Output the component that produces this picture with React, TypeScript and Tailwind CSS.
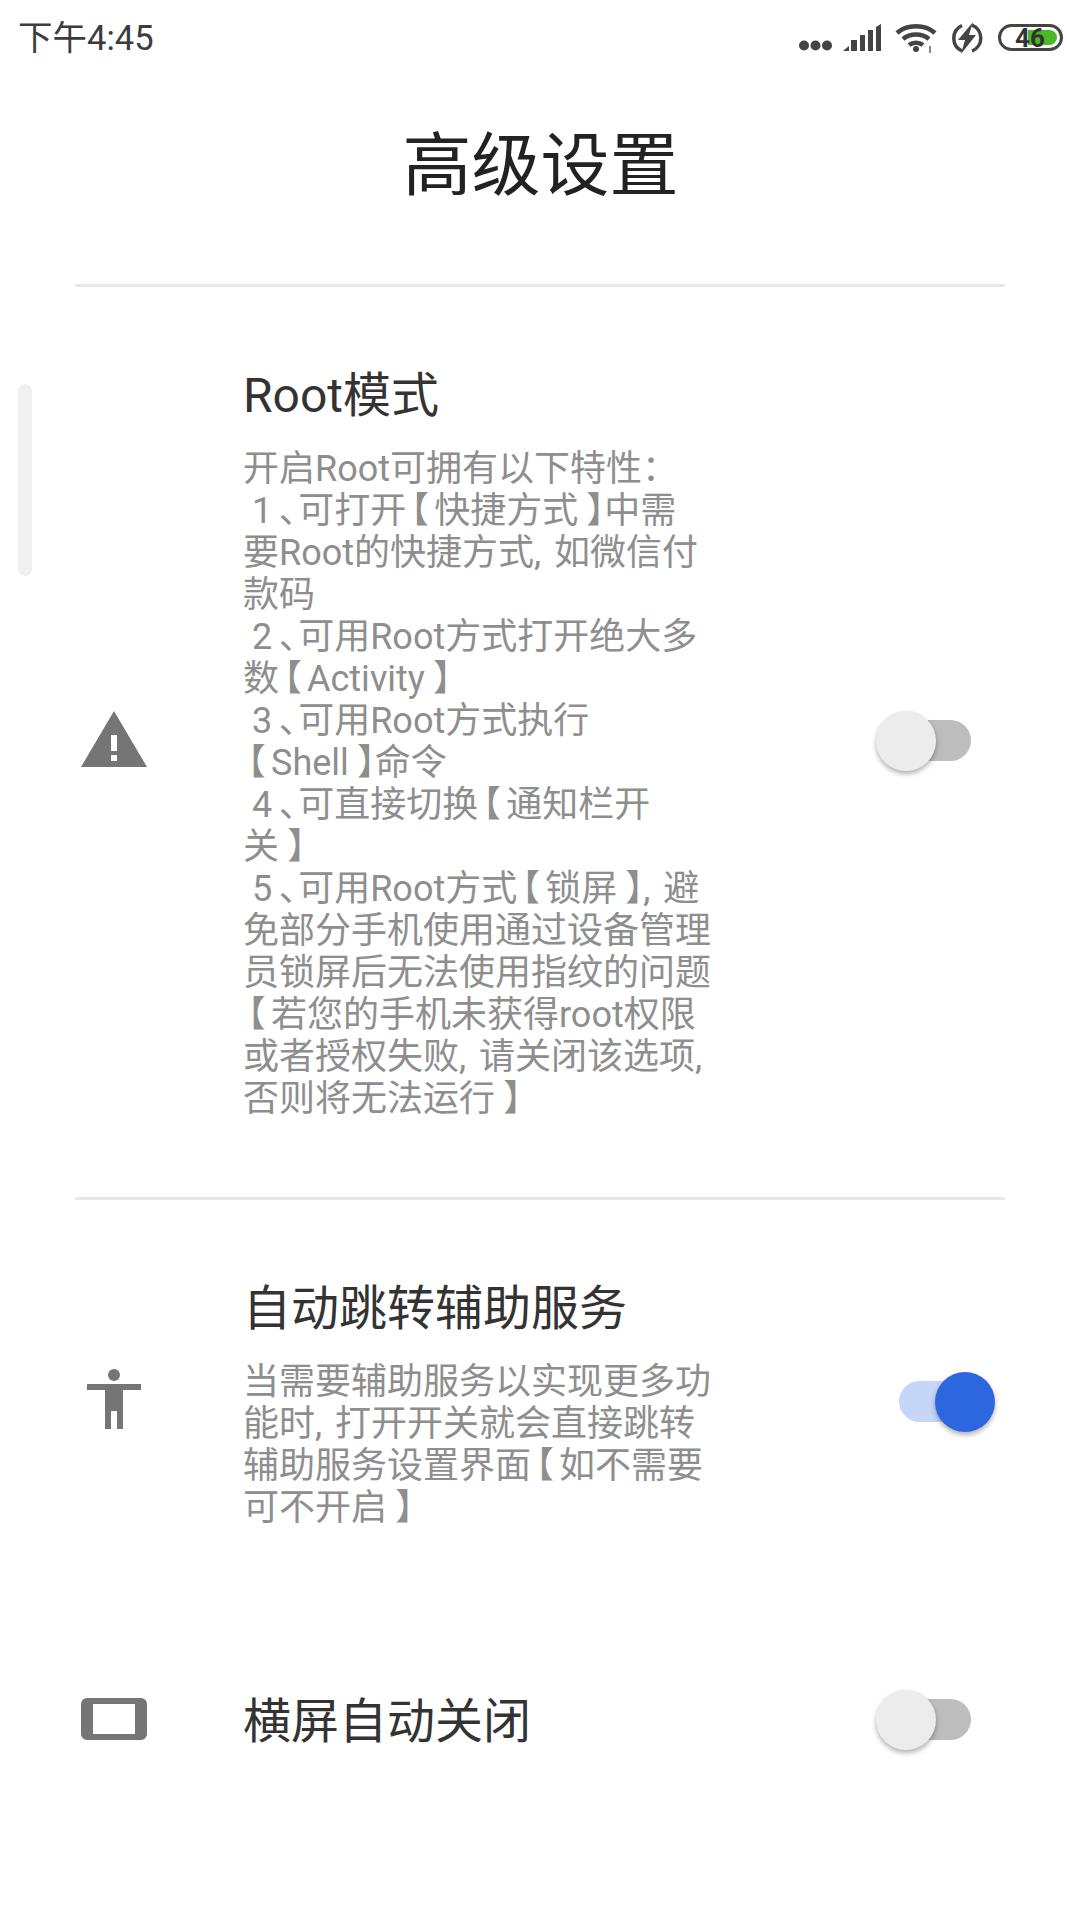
const rootLines = [
  '开启Root可拥有以下特性：',
  ' 1、可打开【快捷方式】中需',
  '要Root的快捷方式, 如微信付',
  '款码',
  ' 2、可用Root方式打开绝大多',
  '数【Activity】',
  ' 3、可用Root方式执行',
  '【Shell】命令',
  ' 4、可直接切换【通知栏开',
  '关】',
  ' 5、可用Root方式【锁屏】, 避',
  '免部分手机使用通过设备管理',
  '员锁屏后无法使用指纹的问题',
  '【若您的手机未获得root权限',
  '或者授权失败, 请关闭该选项,',
  '否则将无法运行】',
]

const autoLines = [
  '当需要辅助服务以实现更多功',
  '能时, 打开开关就会直接跳转',
  '辅助服务设置界面【如不需要',
  '可不开启】',
]

// the phone's font sets these punctuation marks tighter than Noto does
function Line({ text }: { text: string }) {
  const parts = text.split(/(【|】|、|, )/)
  return (
    <div className="whitespace-pre">
      {parts.map((p, i) => {
        if (p === '【') return <span key={i} className="inline-block w-[28px] pl-[4px] [font-feature-settings:'palt']">{p}</span>
        if (p === '】') return <span key={i} className="inline-block w-[26px] pl-[9px] [font-feature-settings:'palt']">{p}</span>
        if (p === '、') return <span key={i} className="inline-block w-[26px] pl-[7px] [font-feature-settings:'palt']">{p}</span>
        if (p === ', ') return <span key={i} className="mr-[4px]">{p}</span>
        return <span key={i}>{p}</span>
      })}
    </div>
  )
}

function Toggle({ on }: { on?: boolean }) {
  return (
    <div className={on ? 'relative h-[41px] w-[71px] rounded-full bg-[#c6d6f8]' : 'relative ml-[1px] h-[41px] w-[71px] rounded-full bg-[#bdbdbd]'}>
      <div
        className={
          on
            ? 'absolute -top-[9px] -right-[25px] h-[60px] w-[60px] rounded-full bg-[#2c67e0] shadow-[0_3px_5px_rgba(0,0,0,0.3)]'
            : 'absolute -top-[9px] -left-[24px] h-[60px] w-[60px] rounded-full bg-[#ececec] shadow-[0_3px_5px_rgba(0,0,0,0.3)]'
        }
      />
    </div>
  )
}

function Row({ icon, title, lines, toggle, className }: { icon: React.ReactNode; title: string; lines?: string[]; toggle?: boolean; className: string }) {
  return (
    <div className={'flex items-center ' + className}>
      <div className="mb-[5px] flex w-[243px] shrink-0 justify-start pl-[81px]">{icon}</div>
      <div className="w-[500px] shrink-0">
        <div className="text-[48px] leading-[60px] text-[#333333]">{title}</div>
        {lines && (
          <div className="mt-[22px] text-[36px] leading-[42px] text-[#8e8e8e]">
            {lines.map((l, i) => (
              <Line key={i} text={l} />
            ))}
          </div>
        )}
      </div>
      <div className="mb-[5px] ml-[156px]">
        <Toggle on={toggle} />
      </div>
    </div>
  )
}

export default function App() {
  return (
    <div className="relative h-[1920px] w-[1067px] overflow-hidden bg-white font-['Roboto','Noto_Sans_CJK_SC',sans-serif]">
      {/* status bar */}
      <div className="flex h-[75px] items-center justify-between pl-[18px] pr-[4px]">
        <span className="pt-[2px] text-[34.5px] leading-none text-[#3c3c3c]">下午4:45</span>
        <div className="flex items-center">
          <svg width="33" height="11" viewBox="0 0 33 11" className="mt-[16px]" fill="#444">
            <circle cx="5" cy="5.5" r="5" />
            <circle cx="16.5" cy="5.5" r="5" />
            <circle cx="28" cy="5.5" r="5" />
          </svg>
          <svg width="39" height="28" viewBox="0 0 39 28" className="ml-[11px]" fill="#444">
            <path d="M0 27 L6 22 V27 Z" />
            <rect x="8" y="16" width="6" height="11" />
            <rect x="17" y="11" width="5" height="16" />
            <rect x="25" y="6" width="5" height="21" />
            <path d="M33 3 L38 0 V27 H33 Z" />
          </svg>
          <svg width="42" height="30" viewBox="0 0 42 30" className="ml-[13px]" fill="none" stroke="#444" strokeWidth="4.5">
            <path d="M2 10 C12 1 30 1 40 10" />
            <path d="M8 16 C15 10 27 10 34 16" />
            <path d="M14 22 C18 19 24 19 28 22" />
            <circle cx="21" cy="26" r="3" fill="#444" stroke="none" />
            <path d="M35 23 V30" strokeWidth="2" stroke="#888" />
          </svg>
          <svg width="32" height="32" viewBox="0 0 32 32" className="ml-[14px]" fill="none">
            <path d="M11 3.5 A14 14 0 0 0 11 29 M21 3 A14 14 0 0 1 21 29" stroke="#444" strokeWidth="3.5" />
            <path d="M22 0 L7 18 H14 L10 32 L25 13 H18 Z" fill="#444" />
          </svg>
          <div className="relative ml-[15px] flex h-[27px] w-[65px] items-center overflow-hidden rounded-full border-[3px] border-[#444] bg-white">
            <div className="absolute inset-y-[3px] left-[27px] right-[3px] rounded-r-full bg-[#4cb825]" />
            <span className="relative ml-[14px] text-[26px] font-bold leading-none text-[#333]">46</span>
          </div>
        </div>
      </div>

      {/* header */}
      <div className="flex h-[209px] items-center justify-center pb-[26px] pl-[14px] text-[69px] text-[#222222]">高级设置</div>
      <div className="ml-[75px] mr-[62px] h-[3px] bg-[#e8e8e8]" />

      <Row
        className="pt-[79px] pb-[77px]"
        icon={
          <svg width="66" height="56" viewBox="0 0 66 56" className="mb-[4px]">
            <path fillRule="evenodd" fill="#757575" d="M33 0 L66 56 H0 Z M30 24 V40 H36 V24 Z M30 44 V50 H36 V44 Z" />
          </svg>
        }
        title="Root模式"
        lines={rootLines}
      />
      <div className="ml-[75px] mr-[62px] h-[3px] bg-[#e8e8e8]" />

      <Row
        className="pt-[79px] pb-[80px]"
        icon={
          <svg width="54" height="60" viewBox="0 0 54 60" className="mb-[6px] ml-[6px]">
            <circle cx="27" cy="6" r="6" fill="#757575" />
            <path fill="#757575" d="M0 15 H54 V21 H36 V60 H30 V42 H24 V60 H18 V21 H0 Z" />
          </svg>
        }
        title="自动跳转辅助服务"
        lines={autoLines}
        toggle
      />

      <Row
        className="pt-[83px]"
        icon={
          <svg width="66" height="42" viewBox="0 0 66 42" className="mb-[2px]">
            <path fillRule="evenodd" fill="#757575" d="M6 0 H60 A6 6 0 0 1 66 6 V36 A6 6 0 0 1 60 42 H6 A6 6 0 0 1 0 36 V6 A6 6 0 0 1 6 0 Z M12 6 V36 H54 V6 Z" />
          </svg>
        }
        title="横屏自动关闭"
      />

      {/* scrollbar */}
      <div className="absolute left-[18px] top-[384px] h-[192px] w-[14px] rounded-full bg-[#f0f0f0]" />
    </div>
  )
}
